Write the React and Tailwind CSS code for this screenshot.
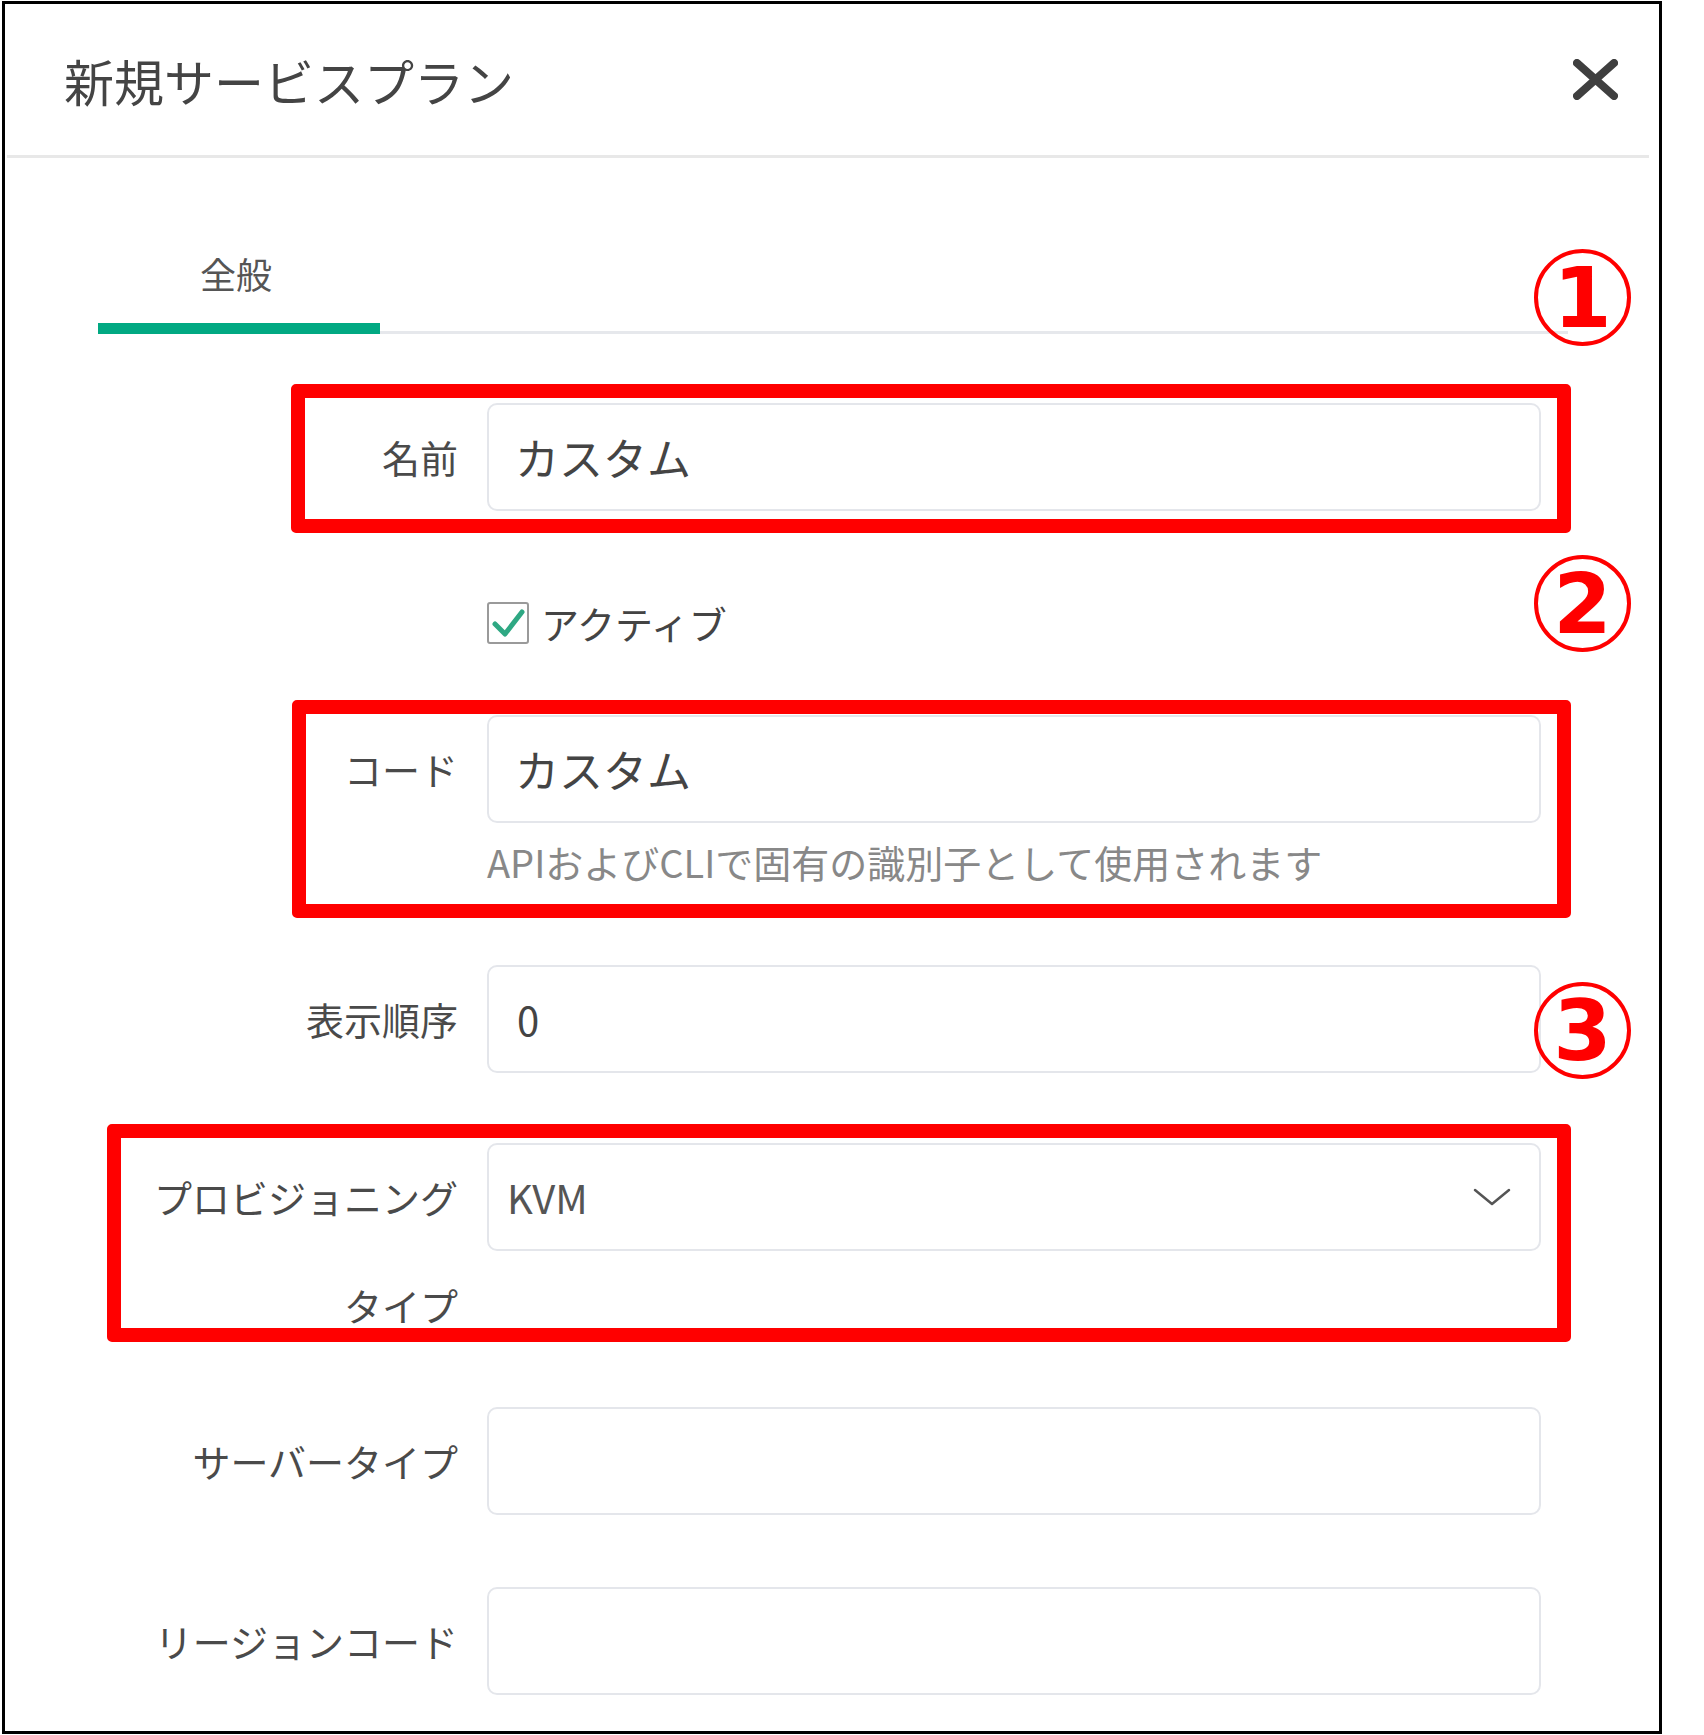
import React from 'react';

const LABEL = "w-[316px] shrink-0 text-right text-[38px] leading-[108px] text-[#4a4a4a]";
const FIELD = "w-[1054px] h-[108px] shrink-0 rounded-[10px] border-2 border-[#e4e6eb] bg-white outline-none";

// red annotation frame drawn over a row
const Mark = ({ className }) => (
  <div className={`pointer-events-none absolute rounded-[5px] border-[14px] border-[#ff0000] ${className}`} />
);

// circled number annotation
const Badge = ({ n, className }) => (
  <div className={`absolute left-[1529px] flex h-[97px] w-[97px] items-center justify-center rounded-full border-[4px] border-[#ff0000] font-['DejaVu_Sans',sans-serif] text-[84px] font-bold leading-none text-[#ff0000] ${className}`}>
    {n}
  </div>
);

const Row = ({ label, children, className = '' }) => (
  <div className={`flex gap-[29px] ${className}`}>
    <div className={LABEL}>{label}</div>
    {children}
  </div>
);

const Field = ({ value = '', className = 'px-[26px] text-[44px]' }) => (
  <input readOnly value={value} className={`${FIELD} text-[#444] ${className}`} />
);

export default function App() {
  return (
    <div className="h-[1735px] w-[1704px] bg-white font-['Noto_Sans_CJK_JP','Noto_Sans',sans-serif]">
      <div className="relative ml-[2px] mt-[1px] h-[1733px] w-[1660px] border-[3px] border-black bg-white">
        {/* header */}
        <div className="ml-[2px] mr-[10px] flex h-[154px] items-center justify-between border-b-[3px] border-[#e8e8e8] pl-[57px] pr-[31px]">
          <h1 className="text-[50px] leading-none text-[#444]">新規サービスプラン</h1>
          <svg width="45" height="41" viewBox="0 0 45 41" fill="none" stroke="#3f3f3f" strokeWidth="8" strokeLinecap="round">
            <line x1="4" y1="4" x2="41" y2="37" />
            <line x1="41" y1="4" x2="4" y2="37" />
          </svg>
        </div>

        {/* tabs */}
        <div className="ml-[93px] mt-[97px] flex w-[1470px] border-b-[3px] border-[#e6e8ec]">
          <div className="-mb-[3px] w-[282px] border-b-[11px] border-[#01a982] pb-[32px] pr-[6px] text-center text-[36px] leading-[36px] text-[#555]">
            全般
          </div>
        </div>

        {/* form */}
        <div className="ml-[137px] w-[1399px]">
          <div className="relative mt-[69px]">
            <Row label="名前">
              <Field value="カスタム" />
            </Row>
            <Mark className="-top-[19px] -bottom-[22px] left-[149px] -right-[30px]" />
          </div>

          <div className="ml-[345px] mt-[91px] flex h-[42px] items-center gap-[12px]">
            <span className="flex h-[42px] w-[42px] items-center justify-center rounded-[3px] border-2 border-[#9a9a9a] bg-white">
              <svg width="38" height="38" viewBox="0 0 38 38" fill="none" stroke="#2ea883" strokeWidth="5" strokeLinecap="round" strokeLinejoin="round">
                <polyline points="6,20 16,30 33,8" />
              </svg>
            </span>
            <span className="text-[38px] leading-[42px] text-[#444]">アクティブ</span>
          </div>

          <div className="relative mt-[71px]">
            <Row label="コード">
              <Field value="カスタム" />
            </Row>
            <p className="ml-[345px] mt-[20px] text-[38px] leading-[38px] text-[#888]">
              APIおよびCLIで固有の識別子として使用されます
            </p>
            <Mark className="-top-[15px] -bottom-[37px] left-[150px] -right-[30px]" />
          </div>

          <Row label="表示順序" className="mt-[84px]">
            <Field value="0" className="px-[28px] text-[40px]" />
          </Row>

          <div className="relative mt-[70px]">
            <Row label="プロビジョニングタイプ">
              <div className={`${FIELD} flex items-center justify-between pl-[18px] pr-[28px]`}>
                <span className="text-[40px] leading-none text-[#555]">KVM</span>
                <svg width="38" height="19" viewBox="0 0 38 19" fill="none" stroke="#555" strokeWidth="2.5" strokeLinecap="round" strokeLinejoin="round">
                  <polyline points="2,2 19,16 36,2" />
                </svg>
              </div>
            </Row>
            <Mark className="-top-[19px] bottom-[17px] -left-[35px] -right-[30px]" />
          </div>

          <Row label="サーバータイプ" className="mt-[48px]">
            <Field />
          </Row>

          <Row label="リージョンコード" className="mt-[72px]">
            <Field />
          </Row>
        </div>

        <Badge n="1" className="top-[245px]" />
        <Badge n="2" className="top-[551px]" />
        <Badge n="3" className="top-[978px]" />
      </div>
    </div>
  );
}
